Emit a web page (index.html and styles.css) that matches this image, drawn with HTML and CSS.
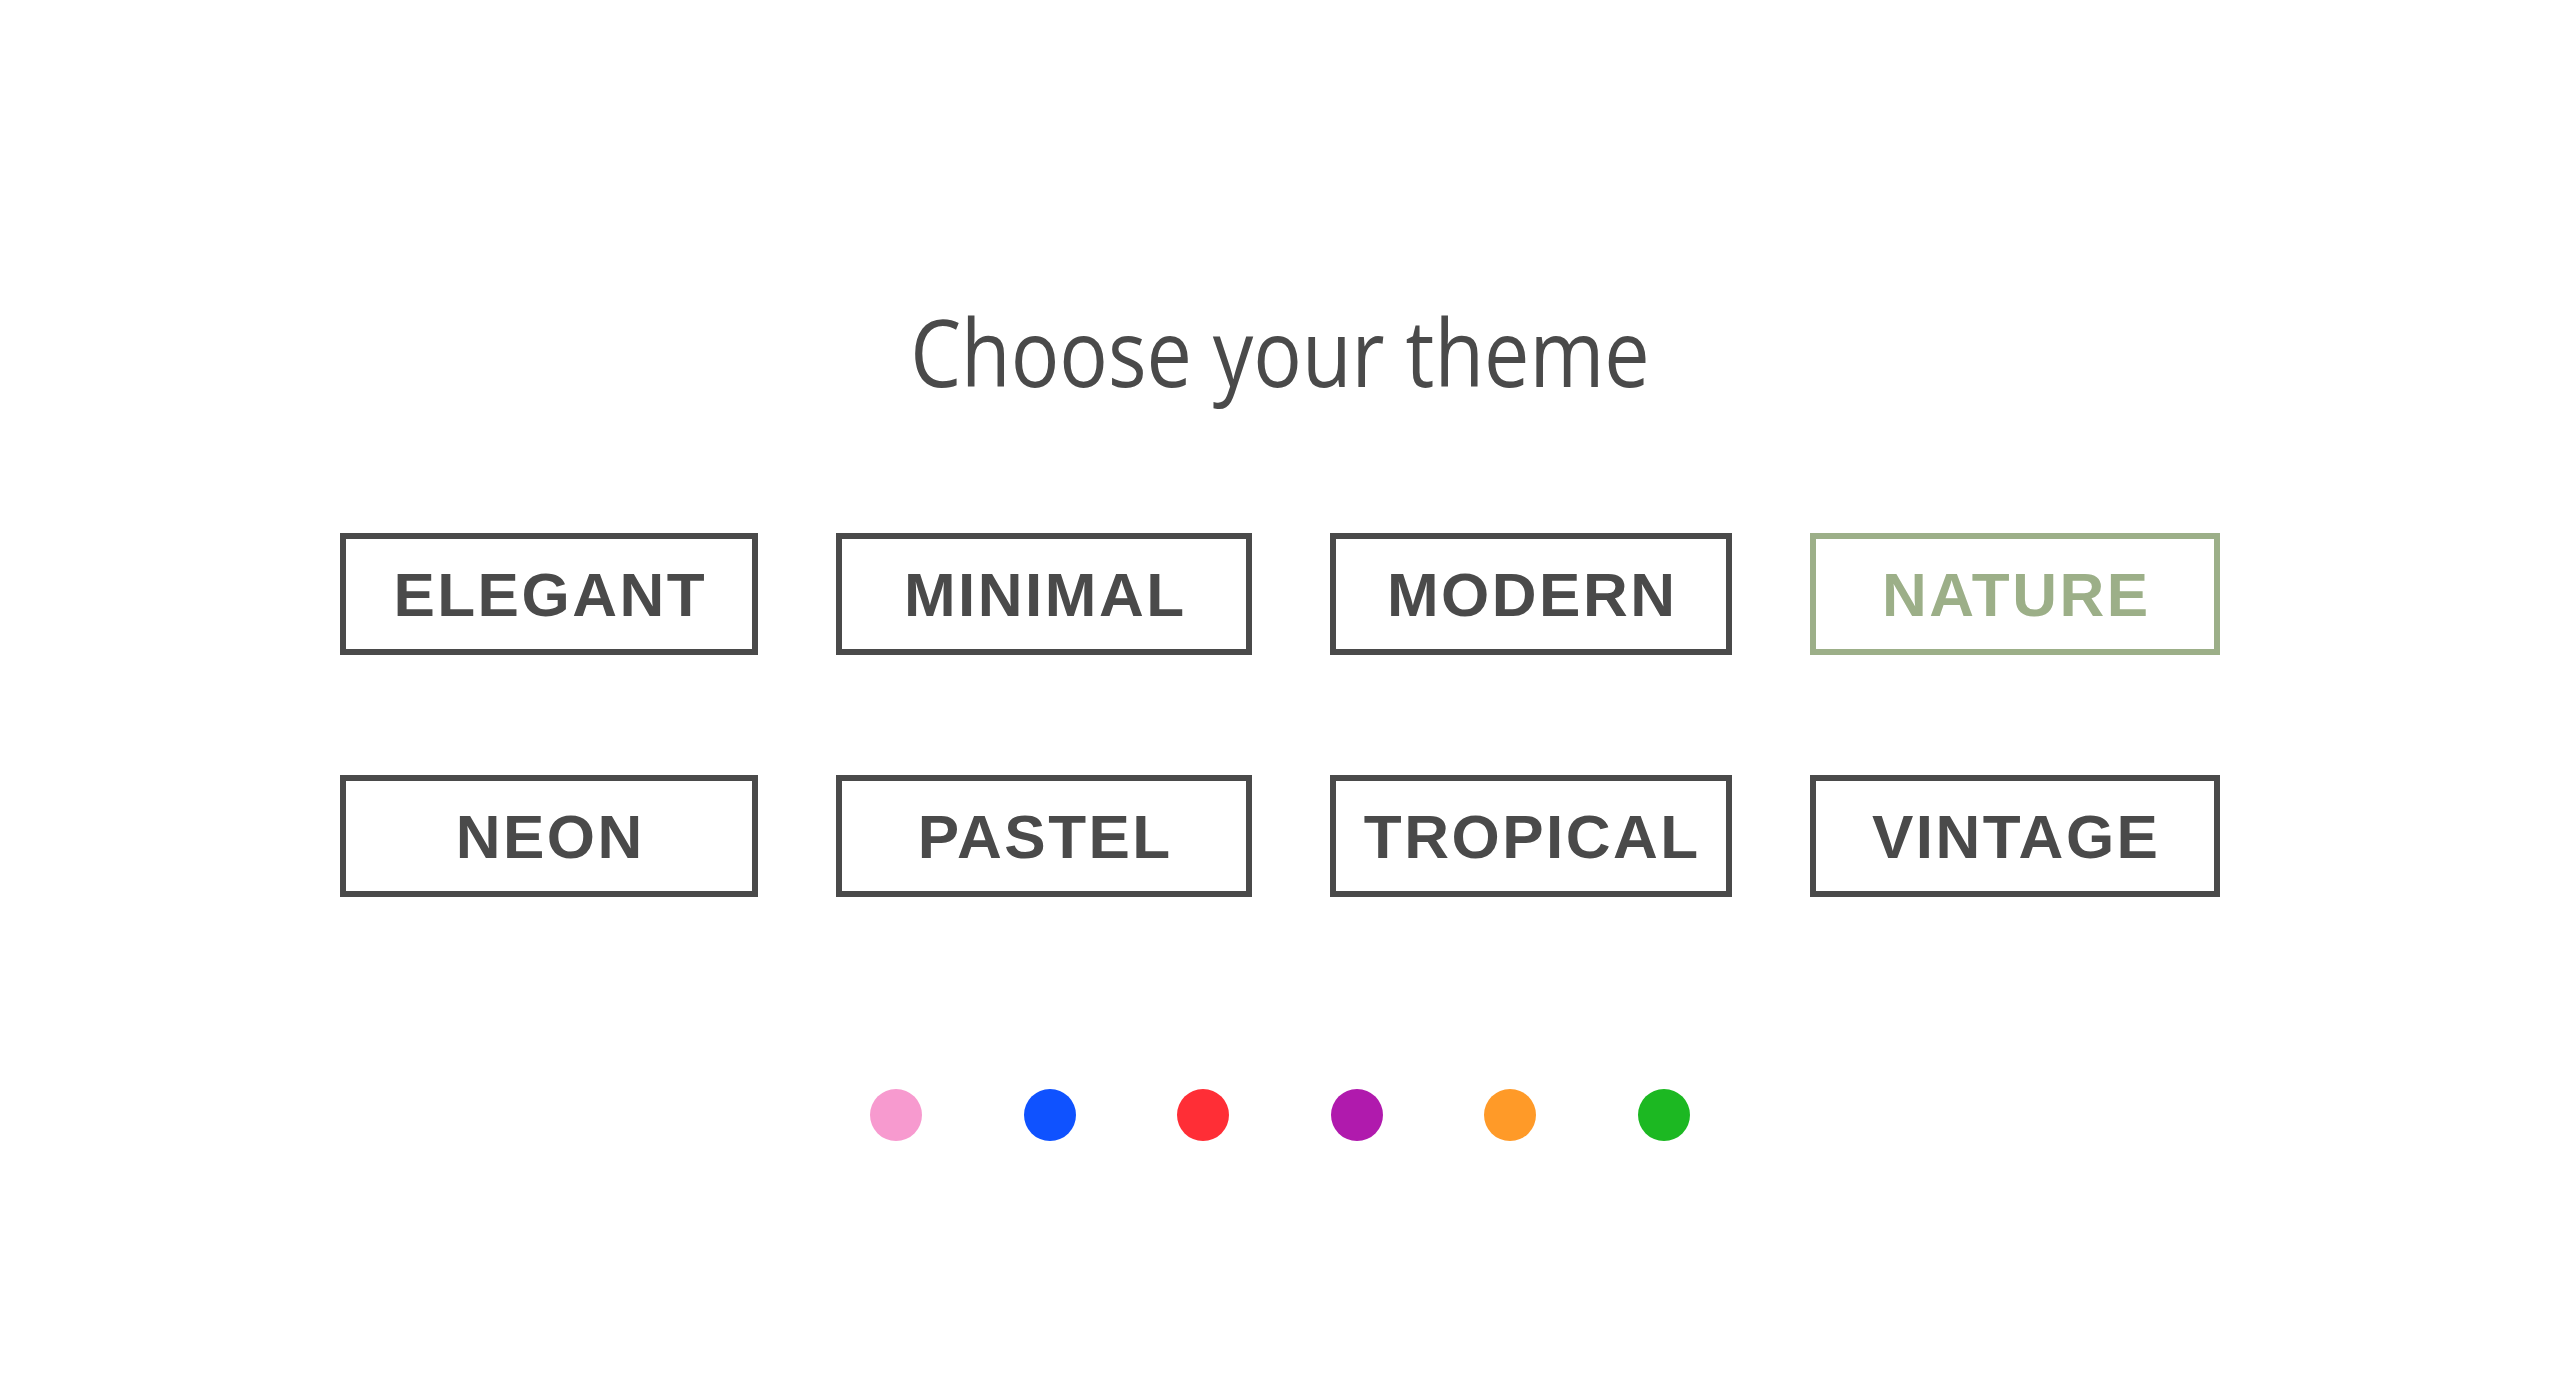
FILE: index.html
```html
<!DOCTYPE html>
<html lang="en">
<head>
<meta charset="utf-8">
<title>Choose your theme</title>
<link rel="stylesheet" href="styles.css">
</head>
<body>
<main class="page">
  <h1 class="title">Choose your theme</h1>
  <div class="themes">
    <button class="theme">ELEGANT</button>
    <button class="theme">MINIMAL</button>
    <button class="theme">MODERN</button>
    <button class="theme theme--active">NATURE</button>
    <button class="theme">NEON</button>
    <button class="theme">PASTEL</button>
    <button class="theme">TROPICAL</button>
    <button class="theme">VINTAGE</button>
  </div>
  <div class="dots">
    <span class="dot dot--pink"></span>
    <span class="dot dot--blue"></span>
    <span class="dot dot--red"></span>
    <span class="dot dot--purple"></span>
    <span class="dot dot--orange"></span>
    <span class="dot dot--green"></span>
  </div>
</main>
</body>
</html>
```

FILE: styles.css
```css
html, body {
  margin: 0;
  padding: 0;
  background: #ffffff;
}

.page {
  display: flex;
  flex-direction: column;
  align-items: center;
  padding-top: 292px;
  color: #4a4a4a;
}

.title {
  margin: 0;
  font-family: "Open Sans", "Noto Sans", sans-serif;
  font-weight: 400;
  font-size: 94px;
  line-height: 118px;
  color: #4a4a4a;
  transform: scaleX(0.86);
}

.themes {
  margin-top: 123px;
  display: grid;
  grid-template-columns: 418px 416px 402px 410px;
  column-gap: 78px;
  row-gap: 120px;
}

.theme {
  height: 122px;
  box-sizing: border-box;
  border: 6px solid #4a4a4a;
  background: #ffffff;
  color: #4a4a4a;
  font-family: "Liberation Sans", Arial, sans-serif;
  font-weight: 700;
  font-size: 62px;
  letter-spacing: 2.5px;
  padding: 0 0 0 2.5px;
  display: flex;
  align-items: center;
  justify-content: center;
}

.theme--active {
  border-color: #9caf88;
  color: #9caf88;
}

.dots {
  margin-top: 192px;
  display: flex;
  gap: 101.5px;
}

.dot {
  width: 52px;
  height: 52px;
  border-radius: 50%;
}

.dot--pink { background: #f79acf; }
.dot--blue { background: #0f52ff; }
.dot--red { background: #ff2e36; }
.dot--purple { background: #b01aad; }
.dot--orange { background: #ff9a28; }
.dot--green { background: #1cb822; }
```
